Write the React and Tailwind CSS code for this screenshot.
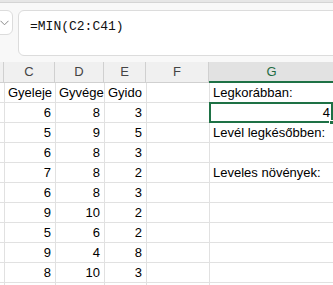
import React from "react";

const rows = [
  ["6", "8", "3", ""],
  ["5", "9", "5", "Levél legkésőbben:"],
  ["6", "8", "3", ""],
  ["7", "8", "2", "Leveles növények:"],
  ["6", "8", "3", ""],
  ["9", "10", "2", ""],
  ["5", "6", "2", ""],
  ["9", "4", "8", ""],
  ["8", "10", "3", ""],
];

const cols = ["w-[4px]", "w-[51px]", "w-[49px]", "w-[42px]", "w-[63px]", "w-[125px]"];

const Cell = ({ w, children, align = "right", className = "" }) => (
  <div
    className={`${w} shrink-0 h-full border-r border-b border-[#e1e1e1] flex items-center overflow-hidden whitespace-nowrap ${
      align === "right" ? "justify-end pr-[4px]" : "justify-start pl-[3px]"
    } ${className}`}
  >
    {children}
  </div>
);

export default function App() {
  return (
    <div className="w-[333px] h-[285px] overflow-hidden bg-white text-black font-['Liberation_Sans',Arial,sans-serif] text-[13px]">
      {/* top strip */}
      <div className="h-[3px] bg-[#e6e6e6] border-b border-[#d4d4d4]" />

      {/* formula bar */}
      <div className="h-[59px] bg-[#f8f8f8] flex items-start pt-[7px]">
        <div className="ml-[-8px] w-[21px] h-[25px] shrink-0 bg-white border border-[#dcdcdc] rounded-md flex items-center justify-end pr-[3px]">
          <svg width="9" height="6" viewBox="0 0 9 6" fill="none">
            <path d="M0.5 0.8 L4.5 4.8 L8.5 0.8" stroke="#8a8a8a" strokeWidth="1" />
          </svg>
        </div>
        <div className="ml-[5px] mr-[-20px] flex-1 h-[46px] bg-white border border-[#dcdcdc] rounded-md pl-[11px] pt-[5px]">
          <span className="font-['Liberation_Mono',monospace] text-[13px] text-[#111]">=MIN(C2:C41)</span>
        </div>
      </div>

      {/* column headers */}
      <div className="flex h-[21px] bg-[#f0f0f0] text-[#444]">
        {["", "C", "D", "E", "F"].map((h, i) => (
          <div
            key={i}
            className={`${cols[i]} shrink-0 h-full border-r border-b border-[#d0d0d0] flex items-center justify-center`}
          >
            {h}
          </div>
        ))}
        <div className={`${cols[5]} shrink-0 h-full bg-[#e2e2e2] text-[#1e6b42] border-b-2 border-[#1e7145] flex items-center justify-center`}>
          G
        </div>
      </div>

      {/* row 1 */}
      <div className="flex h-[20px]">
        <Cell w={cols[0]} />
        <Cell w={cols[1]} align="left">Gyeleje</Cell>
        <Cell w={cols[2]} align="left">Gyvége</Cell>
        <Cell w={cols[3]} align="left">Gyido</Cell>
        <Cell w={cols[4]} />
        <Cell w={cols[5]} align="left">Legkorábban:</Cell>
      </div>

      {/* selected row */}
      <div className="flex h-[20px]">
        <Cell w={cols[0]} />
        <Cell w={cols[1]}>6</Cell>
        <Cell w={cols[2]}>8</Cell>
        <Cell w={cols[3]}>3</Cell>
        <Cell w={cols[4]} />
        <div className={`${cols[5]} shrink-0 h-full relative`}>
          <div className="absolute left-[-1px] top-[-1px] w-[124px] h-[21px] border-2 border-[#1e7145] flex items-center justify-end pr-[1px]">
            4
          </div>
          <div className="absolute left-[119px] top-[17px] w-[5px] h-[5px] bg-[#1e7145] border border-white" />
        </div>
      </div>

      {rows.slice(1).map((r, i) => (
        <div key={i} className="flex h-[20px]">
          <Cell w={cols[0]} />
          <Cell w={cols[1]}>{r[0]}</Cell>
          <Cell w={cols[2]}>{r[1]}</Cell>
          <Cell w={cols[3]}>{r[2]}</Cell>
          <Cell w={cols[4]} />
          <Cell w={cols[5]} align="left">{r[3]}</Cell>
        </div>
      ))}
      <div className="flex h-[20px]">
        {cols.map((c, i) => (
          <Cell key={i} w={c} />
        ))}
      </div>
    </div>
  );
}
